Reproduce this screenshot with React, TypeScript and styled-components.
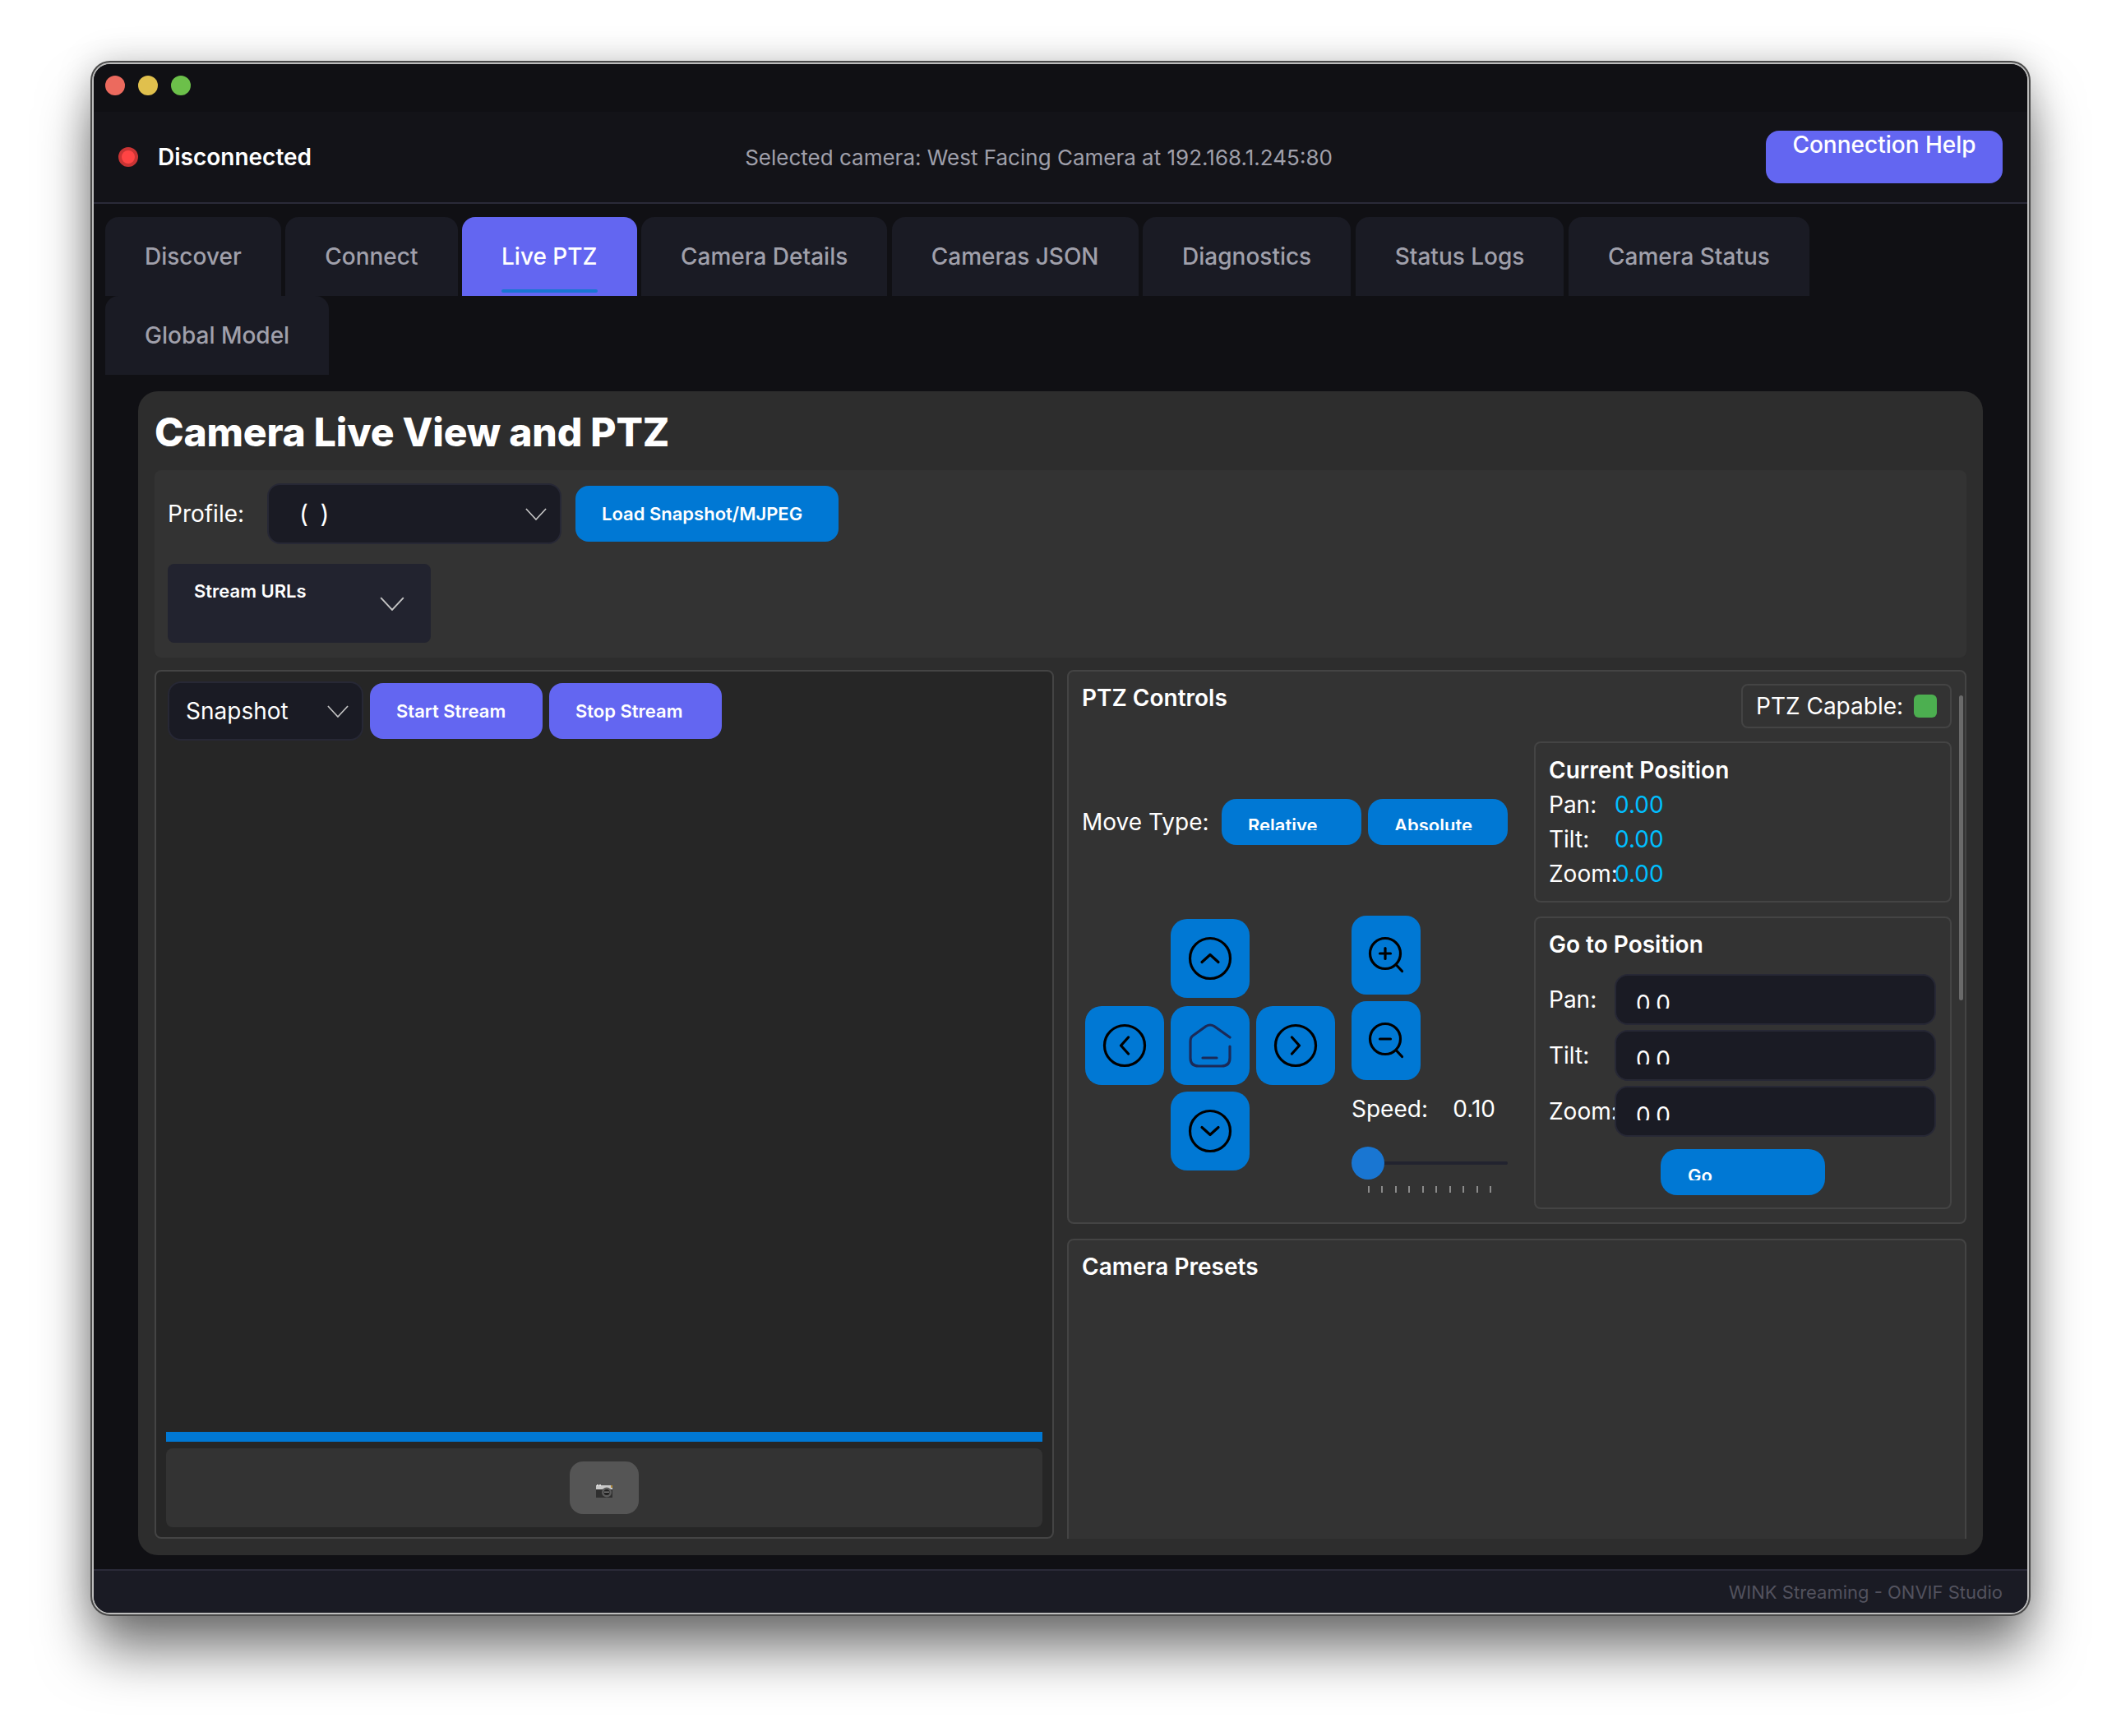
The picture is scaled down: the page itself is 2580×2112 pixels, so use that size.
import styled, { createGlobalStyle } from 'styled-components';

const GlobalStyle = createGlobalStyle`
  html, body {
    margin: 0;
    padding: 0;
    background: #ffffff;
    overflow: hidden;
  }
  * {
    box-sizing: border-box;
  }
  #root {
    font-family: 'Inter', 'Liberation Sans', sans-serif;
  }
`;

const Page = styled.div`
  width: 2580px;
  height: 2112px;
  padding: 76px 0 0 112px;
`;

const Window = styled.div`
  width: 2356px;
  height: 1888px;
  border: 2px solid #bdbdbd;
  border-radius: 22px;
  background: #101014;
  display: flex;
  flex-direction: column;
  overflow: hidden;
  box-shadow: 0 0 0 2px #4a4a4a, 0 46px 66px -2px rgba(0, 0, 0, 0.52), 0 0 44px rgba(0, 0, 0, 0.22);
`;

const TitleBar = styled.div`
  height: 58px;
  flex-shrink: 0;
  padding: 14px 0 0 14px;
  display: flex;
  gap: 16px;
  background: #101014;
`;

const Light = styled.span<{ $color: string }>`
  width: 24px;
  height: 24px;
  border-radius: 50%;
  background: ${(p) => p.$color};
`;

const Header = styled.header`
  height: 112px;
  flex-shrink: 0;
  padding: 0 30px;
  display: flex;
  align-items: center;
  justify-content: space-between;
  background: #131318;
  border-bottom: 2px solid #2a2a38;
`;

const Status = styled.div`
  display: flex;
  align-items: center;
  gap: 24px;
  color: #ffffff;
  font-size: 28px;
  font-weight: 600;
`;

const StatusDot = styled.span`
  width: 24px;
  height: 24px;
  border-radius: 50%;
  background: #ff4444;
  border: 4px solid #c93434;
`;

const Selected = styled.div`
  color: #a0a0ab;
  font-size: 26px;
`;

const HelpButton = styled.button`
  width: 288px;
  height: 64px;
  padding: 0;
  border: none;
  border-radius: 16px;
  background: #6366f1;
  color: #ffffff;
  font: 500 28px/34px 'Inter', sans-serif;
  display: flex;
  justify-content: center;
  align-items: flex-start;
`;

const Tabs = styled.nav`
  flex-shrink: 0;
  padding: 16px 14px 0;
  display: flex;
  flex-wrap: wrap;
  column-gap: 5.5px;
`;

const Tab = styled.div<{ $active?: boolean }>`
  height: 96px;
  padding: 0 48px;
  display: flex;
  align-items: center;
  position: relative;
  border-radius: 16px 16px 0 0;
  background: ${(p) => (p.$active ? '#6366f1' : '#1a1b24')};
  color: ${(p) => (p.$active ? '#ffffff' : '#a0a0ab')};
  font-size: 28px;
  font-weight: 500;
  &::after {
    content: '';
    display: ${(p) => (p.$active ? 'block' : 'none')};
    position: absolute;
    left: 48px;
    right: 48px;
    bottom: 4px;
    height: 4px;
    border-radius: 2px;
    background: #1976d2;
  }
`;

const Main = styled.main`
  flex: 1;
  min-height: 0;
  padding: 20px 54px 17px;
  display: flex;
`;

const Panel = styled.section`
  flex: 1;
  min-width: 0;
  padding: 20px;
  border-radius: 24px;
  background: #2d2d2d;
  display: flex;
  flex-direction: column;
`;

const Title = styled.h1`
  margin: 0 0 16px;
  color: #ffffff;
  font-size: 48px;
  line-height: 60px;
  font-weight: 800;
  letter-spacing: -0.2px;
`;

const Toolbar = styled.div`
  height: 228px;
  flex-shrink: 0;
  padding: 16px;
  border-radius: 8px;
  background: #333333;
  display: flex;
  flex-direction: column;
  gap: 24px;
`;

const ToolbarRow = styled.div`
  display: flex;
  align-items: center;
`;

const Label = styled.span`
  color: #ffffff;
  font-size: 28px;
  line-height: 34px;
`;

const ProfileLabel = styled(Label)`
  width: 121px;
`;

const DarkSelect = styled.div`
  height: 74px;
  border: 2px solid #272835;
  border-radius: 16px;
  background: #1a1b24;
  color: #ffffff;
  font-size: 28px;
  display: flex;
  align-items: center;
  justify-content: space-between;
`;

const ProfileSelect = styled(DarkSelect)`
  width: 358px;
  padding: 0 16px 0 37px;
  margin-right: 17px;
  font-size: 30px;
  word-spacing: 6px;
`;

const ActionButton = styled.button<{ $color: string }>`
  padding: 0 32px;
  border: none;
  border-radius: 16px;
  background: ${(p) => p.$color};
  color: #ffffff;
  font: 600 22px/28px 'Inter', sans-serif;
  text-align: left;
  white-space: nowrap;
  display: flex;
  align-items: center;
`;

const LoadButton = styled(ActionButton)`
  width: 320px;
  height: 68px;
`;

const StreamUrls = styled.div`
  width: 320px;
  height: 96px;
  padding: 18px 32px 0 32px;
  border-radius: 8px;
  background: #22232f;
  color: #ffffff;
  font-size: 22px;
  font-weight: 600;
  line-height: 30px;
  display: flex;
  justify-content: space-between;
  align-items: flex-start;
`;

const StreamChevron = styled.span`
  margin-top: 22px;
  display: flex;
`;

const Columns = styled.div`
  flex: 1;
  min-height: 0;
  margin-top: 15px;
  display: grid;
  grid-template-columns: 1094px 1094px;
  column-gap: 16px;
`;

const ViewPanel = styled.div`
  padding: 12px;
  border: 2px solid #444444;
  border-radius: 8px;
  background: #262626;
  display: flex;
  flex-direction: column;
`;

const ViewToolbar = styled.div`
  margin-left: 2px;
  display: flex;
  align-items: center;
  gap: 8px;
`;

const ModeSelect = styled(DarkSelect)`
  width: 238px;
  height: 72px;
  padding: 0 16px 0 20px;
`;

const StreamButton = styled(ActionButton)`
  width: 210px;
  height: 68px;
`;

const Spacer = styled.div`
  flex: 1;
`;

const ProgressBar = styled.div`
  height: 12px;
  margin-bottom: 8px;
  background: #0078d4;
`;

const SnapshotBar = styled.div`
  height: 96px;
  border-radius: 8px;
  background: #333333;
  display: flex;
  align-items: center;
  justify-content: center;
`;

const SnapshotButton = styled.button`
  width: 84px;
  height: 64px;
  padding: 8px 0 0;
  border: none;
  border-radius: 16px;
  background: #555555;
  display: flex;
  align-items: center;
  justify-content: center;
`;

const RightColumn = styled.div`
  min-height: 0;
  overflow: hidden;
  display: flex;
  flex-direction: column;
  gap: 18px;
`;

const Card = styled.div`
  border: 2px solid #444444;
  background: #333333;
`;

const PtzCard = styled(Card)`
  flex-shrink: 0;
  height: 674px;
  padding: 15px 16px 16px 16px;
  border-radius: 8px;
  position: relative;
`;

const PresetCard = styled(Card)`
  flex-shrink: 0;
  height: 500px;
  padding: 15px 16px;
  border-radius: 8px 8px 0 0;
`;

const CardTitle = styled.h2`
  margin: 0;
  color: #ffffff;
  font-size: 28px;
  line-height: 34px;
  font-weight: 600;
`;

const PtzHeader = styled.div`
  display: flex;
  justify-content: space-between;
  align-items: flex-start;
`;

const Capable = styled.div`
  width: 256px;
  height: 54px;
  padding: 0 16px 0 16px;
  border: 2px solid #444444;
  border-radius: 8px;
  color: #ffffff;
  font-size: 28px;
  display: flex;
  align-items: center;
  justify-content: space-between;
`;

const CapableLed = styled.span`
  width: 28px;
  height: 28px;
  border-radius: 6px;
  background: #4caf50;
`;

const Scroll = styled.div`
  position: absolute;
  top: 29px;
  right: 2px;
  width: 5px;
  height: 371px;
  border-radius: 3px;
  background: #6a6a6a;
`;

const PtzBody = styled.div`
  margin-top: 16px;
  display: grid;
  grid-template-columns: 518px 508px;
  column-gap: 32px;
`;

const ControlColumn = styled.div`
  display: flex;
  flex-direction: column;
`;

const MoveRow = styled.div`
  margin-top: 70px;
  display: flex;
  align-items: center;
  gap: 8px;
`;

const MoveLabel = styled(Label)`
  width: 162px;
`;

const ClippedButton = styled.button`
  width: 170px;
  height: 56px;
  padding: 21px 0 0 32px;
  border: none;
  border-radius: 18px;
  background: #0078d4;
  color: #ffffff;
  font: 600 22px/22px 'Inter', sans-serif;
  display: flex;
  align-items: flex-start;
`;

const ClipText = styled.span`
  display: block;
  height: 17px;
  overflow: hidden;
`;

const PadRow = styled.div`
  margin-top: 86px;
  display: flex;
  gap: 20px;
`;

const Pad = styled.div`
  margin: 4px 0 0 4px;
  display: grid;
  grid-template-columns: repeat(3, 96px);
  grid-template-rows: 98px 96px 96px;
  column-gap: 8px;
  row-gap: 8px;
  align-self: flex-start;
`;

const PadButton = styled.button<{ $col: number; $row: number }>`
  grid-column: ${(p) => p.$col};
  grid-row: ${(p) => p.$row};
  height: 96px;
  padding: 0;
  border: none;
  border-radius: 20px;
  background: #0078d4;
  display: flex;
  align-items: center;
  justify-content: center;
`;

const ZoomColumn = styled.div`
  width: 190px;
  display: flex;
  flex-direction: column;
`;

const ZoomButton = styled.button`
  width: 84px;
  height: 96px;
  margin-bottom: 8px;
  padding: 0 2px 4px 0;
  border: none;
  border-radius: 18px;
  background: #0078d4;
  display: flex;
  align-items: center;
  justify-content: center;
`;

const SpeedRow = styled.div`
  margin-top: 10px;
  width: 175px;
  display: flex;
  justify-content: space-between;
`;

const Slider = styled.div`
  margin-top: 29px;
  display: flex;
  align-items: center;
`;

const SliderThumb = styled.span`
  width: 40px;
  height: 40px;
  border-radius: 50%;
  background: #1976d2;
`;

const SliderTrack = styled.span`
  flex: 1;
  height: 4px;
  border-radius: 0 2px 2px 0;
  background: #22232f;
`;

const Ticks = styled.div`
  width: 150px;
  margin: 8px 0 0 20px;
  display: flex;
  justify-content: space-between;
`;

const Tick = styled.span`
  width: 2px;
  height: 8px;
  background: #8a8a8a;
`;

const PositionColumn = styled.div`
  display: flex;
  flex-direction: column;
  gap: 17px;
`;

const PositionBox = styled.div`
  padding: 16px 16px 12px;
  border: 2px solid #444444;
  border-radius: 8px;
`;

const ReadoutList = styled.div`
  margin-top: 4px;
  display: flex;
  flex-direction: column;
`;

const Readout = styled.div`
  height: 42px;
  display: flex;
  align-items: center;
`;

const FieldLabel = styled(Label)`
  width: 80px;
  flex-shrink: 0;
`;

const Value = styled.span`
  color: #00bfff;
  font-size: 28px;
`;

const GoBox = styled(PositionBox)`
  height: 356px;
  padding-top: 15px;
`;

const FieldList = styled.div`
  margin-top: 19px;
  display: flex;
  flex-direction: column;
  gap: 6px;
`;

const FieldRow = styled.div`
  display: flex;
  align-items: center;
`;

const FieldInput = styled.div`
  width: 391px;
  height: 62px;
  padding: 20px 0 0 24px;
  border: 2px solid #272835;
  border-radius: 16px;
  background: #1a1b24;
  color: #ffffff;
  font-size: 28px;
  line-height: 28px;
`;

const FieldClip = styled.span`
  display: block;
  height: 20px;
  overflow: hidden;
`;

const GoButton = styled(ClippedButton)`
  width: 200px;
  margin: 15px auto 0;
  padding-left: 33px;
  border-radius: 20px;
`;

const Footer = styled.footer`
  height: 53px;
  flex-shrink: 0;
  padding: 0 30px;
  border-top: 2px solid #2a2a38;
  background: #1a1b24;
  color: #52525e;
  font-size: 22px;
  display: flex;
  align-items: center;
  justify-content: flex-end;
`;

const tabs = ['Discover', 'Connect', 'Live PTZ', 'Camera Details', 'Cameras JSON', 'Diagnostics', 'Status Logs', 'Camera Status', 'Global Model'];

const chevrons: Record<string, string> = {
  up: 'M17 31.5 27 22.5 37 31.5',
  down: 'M17 22.5 27 31.5 37 22.5',
  left: 'M31.5 17 22.5 27 31.5 37',
  right: 'M22.5 17 31.5 27 22.5 37',
};

function Chevron({ size }: { size: number }) {
  return (
    <svg width={size} height={size / 2 + 2} viewBox="0 0 28 16" fill="none" stroke="#c4c4c4" strokeWidth="1.8">
      <path d="M1 1 14 15 27 1" />
    </svg>
  );
}

function CircleArrow({ dir }: { dir: string }) {
  return (
    <svg width="54" height="54" viewBox="0 0 54 54" fill="none" stroke="#000" strokeWidth="3.2" strokeLinecap="round" strokeLinejoin="round">
      <circle cx="27" cy="27" r="24.5" />
      <path d={chevrons[dir]} />
    </svg>
  );
}

function HomeIcon() {
  return (
    <svg width="54" height="54" viewBox="0 0 54 54" fill="none" stroke="#1b2a58" strokeWidth="3.2" strokeLinecap="round" strokeLinejoin="round">
      <path d="M51 17 32 3.5Q27 .5 22 3.5L6 15Q3 17 3 22L3 42Q3 52 13 52L41 52Q51 52 51 42L51 28" />
      <path d="M18 42H35" />
    </svg>
  );
}

function ZoomIcon({ plus }: { plus?: boolean }) {
  return (
    <svg width="52" height="52" viewBox="-26 -26 52 52" fill="none" stroke="#000" strokeWidth="3.2" strokeLinecap="round">
      <circle cx="0" cy="0" r="18.5" />
      <path d="M13.5 14 20.5 21.5" />
      <path d="M-6.5 0H6.5" />
      {plus && <path d="M0 -6.5V6.5" />}
    </svg>
  );
}

function CameraIcon() {
  return (
    <svg width="20" height="16" viewBox="0 0 20 16">
      <rect x="0" y="3" width="20" height="13" fill="#2f2f2f" />
      <rect x="0" y="1" width="20" height="5" fill="#c9c9c9" />
      <rect x="1" y="0" width="2" height="2" fill="#e0e0e0" />
      <rect x="4" y="0" width="2" height="2" fill="#e0e0e0" />
      <rect x="18" y="1" width="2" height="3" fill="#b08a3c" />
      <circle cx="13" cy="9.5" r="6" fill="#5b5b5b" />
      <circle cx="13" cy="9.5" r="3.5" fill="#222" />
      <rect x="10" y="8.5" width="6" height="1.5" fill="#777" />
    </svg>
  );
}

export default function App() {
  return (
    <Page>
      <GlobalStyle />
      <Window>
        <TitleBar>
          <Light $color="#ec6a5e" />
          <Light $color="#e0c04d" />
          <Light $color="#6cc04a" />
        </TitleBar>
        <Header>
          <Status>
            <StatusDot />
            Disconnected
          </Status>
          <Selected>Selected camera: West Facing Camera at 192.168.1.245:80</Selected>
          <HelpButton>Connection Help</HelpButton>
        </Header>
        <Tabs>
          {tabs.map((tab) => (
            <Tab key={tab} $active={tab === 'Live PTZ'}>{tab}</Tab>
          ))}
        </Tabs>
        <Main>
          <Panel>
            <Title>Camera Live View and PTZ</Title>
            <Toolbar>
              <ToolbarRow>
                <ProfileLabel>Profile:</ProfileLabel>
                <ProfileSelect>
                  ( )
                  <Chevron size={26} />
                </ProfileSelect>
                <LoadButton $color="#0078d4">Load Snapshot/MJPEG</LoadButton>
              </ToolbarRow>
              <StreamUrls>
                Stream URLs
                <StreamChevron>
                  <Chevron size={30} />
                </StreamChevron>
              </StreamUrls>
            </Toolbar>
            <Columns>
              <ViewPanel>
                <ViewToolbar>
                  <ModeSelect>
                    Snapshot
                    <Chevron size={26} />
                  </ModeSelect>
                  <StreamButton $color="#6366f1">Start Stream</StreamButton>
                  <StreamButton $color="#6366f1">Stop Stream</StreamButton>
                </ViewToolbar>
                <Spacer />
                <ProgressBar />
                <SnapshotBar>
                  <SnapshotButton>
                    <CameraIcon />
                  </SnapshotButton>
                </SnapshotBar>
              </ViewPanel>
              <RightColumn>
                <PtzCard>
                  <Scroll />
                  <PtzHeader>
                    <CardTitle>PTZ Controls</CardTitle>
                    <Capable>
                      PTZ Capable:
                      <CapableLed />
                    </Capable>
                  </PtzHeader>
                  <PtzBody>
                    <ControlColumn>
                      <MoveRow>
                        <MoveLabel>Move Type:</MoveLabel>
                        <ClippedButton><ClipText>Relative</ClipText></ClippedButton>
                        <ClippedButton><ClipText>Absolute</ClipText></ClippedButton>
                      </MoveRow>
                      <PadRow>
                        <Pad>
                          <PadButton $col={2} $row={1}><CircleArrow dir="up" /></PadButton>
                          <PadButton $col={1} $row={2}><CircleArrow dir="left" /></PadButton>
                          <PadButton $col={2} $row={2}><HomeIcon /></PadButton>
                          <PadButton $col={3} $row={2}><CircleArrow dir="right" /></PadButton>
                          <PadButton $col={2} $row={3}><CircleArrow dir="down" /></PadButton>
                        </Pad>
                        <ZoomColumn>
                          <ZoomButton><ZoomIcon plus /></ZoomButton>
                          <ZoomButton><ZoomIcon /></ZoomButton>
                          <SpeedRow>
                            <Label>Speed:</Label>
                            <Label>0.10</Label>
                          </SpeedRow>
                          <Slider>
                            <SliderThumb />
                            <SliderTrack />
                          </Slider>
                          <Ticks>
                            {Array.from({ length: 10 }, (_, i) => (
                              <Tick key={i} />
                            ))}
                          </Ticks>
                        </ZoomColumn>
                      </PadRow>
                    </ControlColumn>
                    <PositionColumn>
                      <PositionBox>
                        <CardTitle>Current Position</CardTitle>
                        <ReadoutList>
                          <Readout><FieldLabel>Pan:</FieldLabel><Value>0.00</Value></Readout>
                          <Readout><FieldLabel>Tilt:</FieldLabel><Value>0.00</Value></Readout>
                          <Readout><FieldLabel>Zoom:</FieldLabel><Value>0.00</Value></Readout>
                        </ReadoutList>
                      </PositionBox>
                      <GoBox>
                        <CardTitle>Go to Position</CardTitle>
                        <FieldList>
                          {['Pan:', 'Tilt:', 'Zoom:'].map((name) => (
                            <FieldRow key={name}>
                              <FieldLabel>{name}</FieldLabel>
                              <FieldInput><FieldClip>0.0</FieldClip></FieldInput>
                            </FieldRow>
                          ))}
                        </FieldList>
                        <GoButton><ClipText>Go</ClipText></GoButton>
                      </GoBox>
                    </PositionColumn>
                  </PtzBody>
                </PtzCard>
                <PresetCard>
                  <CardTitle>Camera Presets</CardTitle>
                </PresetCard>
              </RightColumn>
            </Columns>
          </Panel>
        </Main>
        <Footer>WINK Streaming - ONVIF Studio</Footer>
      </Window>
    </Page>
  );
}
